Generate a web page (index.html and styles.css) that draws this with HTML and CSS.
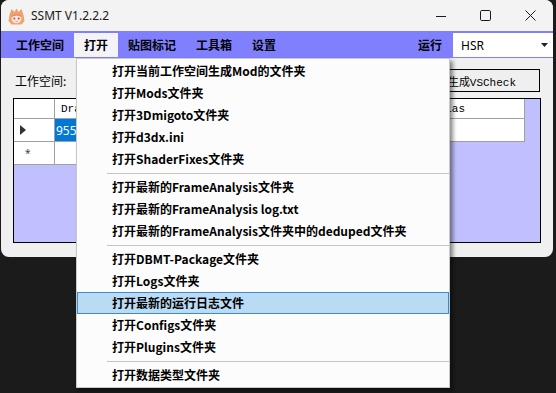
FILE: index.html
```html
<!DOCTYPE html>
<html lang="zh-CN">
  <head>
    <meta charset="UTF-8" />
    <title>SSMT V1.2.2.2</title>
    <link rel="stylesheet" href="styles.css">
  </head>
  <body>
    <div class="window">
      <!-- Title bar -->
      <div class="titlebar">
        <svg class="app-icon" width="17" height="17" viewBox="0 0 17 17">
          <path d="M1.5 7 L3.5 1 L6.5 4 L8.5 0.5 L10.5 4 L13.5 1 L15.5 7 L16.5 13 L13.5 16.5 H3.5 L0.5 13 Z" fill="#eea36c" />
          <ellipse cx="8.5" cy="10.5" rx="5" ry="4.8" fill="#fbe4d8" />
          <path d="M3.5 8 Q8.5 3.5 13.5 8 L13.5 9 Q8.5 6 3.5 9 Z" fill="#e5885a" />
          <circle cx="6.3" cy="10.6" r="1" fill="#b4505a" />
          <circle cx="10.7" cy="10.6" r="1" fill="#b4505a" />
          <path d="M7.6 13.2 Q8.5 13.9 9.4 13.2" stroke="#d06070" stroke-width="0.7" fill="none" />
        </svg>
        <span class="title">SSMT V1.2.2.2</span>
        <div class="caption-buttons">
          <div class="cap">
            <svg width="10" height="10" viewBox="0 0 10 10"><path d="M0 5.5 H10" stroke="#1a1a1a" stroke-width="1" /></svg>
          </div>
          <div class="cap">
            <svg width="11" height="11" viewBox="0 0 11 11"><rect x="0.5" y="0.5" width="10" height="10" rx="1.2" stroke="#1a1a1a" stroke-width="1" fill="none" /></svg>
          </div>
          <div class="cap">
            <svg width="11" height="11" viewBox="0 0 11 11"><path d="M0.5 0.5 L10.5 10.5 M10.5 0.5 L0.5 10.5" stroke="#1a1a1a" stroke-width="1" /></svg>
          </div>
        </div>
      </div>

      <!-- Menu bar -->
      <div class="menubar">
        <div class="menu-item">工作空间</div>
        <div class="menu-item open">打开
          <div class="dropdown">
            <div class="drop-item">打开当前工作空间生成Mod的文件夹</div>
            <div class="drop-item">打开Mods文件夹</div>
            <div class="drop-item">打开3Dmigoto文件夹</div>
            <div class="drop-item">打开d3dx.ini</div>
            <div class="drop-item">打开ShaderFixes文件夹</div>
            <div class="drop-sep"></div>
            <div class="drop-item">打开最新的FrameAnalysis文件夹</div>
            <div class="drop-item">打开最新的FrameAnalysis log.txt</div>
            <div class="drop-item">打开最新的FrameAnalysis文件夹中的deduped文件夹</div>
            <div class="drop-sep"></div>
            <div class="drop-item">打开DBMT-Package文件夹</div>
            <div class="drop-item">打开Logs文件夹</div>
            <div class="drop-item hover">打开最新的运行日志文件</div>
            <div class="drop-item">打开Configs文件夹</div>
            <div class="drop-item">打开Plugins文件夹</div>
            <div class="drop-sep"></div>
            <div class="drop-item">打开数据类型文件夹</div>
          </div>
        </div>
        <div class="menu-item">贴图标记</div>
        <div class="menu-item">工具箱</div>
        <div class="menu-item">设置</div>
        <div class="menu-spacer"></div>
        <div class="run-label">运行</div>
        <div class="combo">
          <span>HSR</span>
          <svg width="7" height="4" viewBox="0 0 7 4"><path d="M0 0 H7 L3.5 4 Z" fill="#222" /></svg>
        </div>
      </div>

      <!-- Client area -->
      <div class="client">
        <div class="top-row">
          <span class="ws-label">工作空间:</span>
          <div class="vscheck">生成VSCheck</div>
        </div>
        <div class="grid-view">
          <div class="gv-table">
            <div class="gv-cell rowhdr"></div>
            <div class="gv-cell colhdr">DrawIB</div>
            <div class="gv-cell colhdr">Alias</div>

            <div class="gv-cell rowhdr">
              <svg width="6" height="10" viewBox="0 0 6 10"><path d="M0 0 L6 5 L0 10 Z" fill="#333" /></svg>
            </div>
            <div class="gv-cell selected">955</div>
            <div class="gv-cell"></div>

            <div class="gv-cell rowhdr"><span class="new-row">*</span></div>
            <div class="gv-cell"></div>
            <div class="gv-cell empty"></div>
          </div>
        </div>
      </div>
    </div>
  </body>
</html>
```

FILE: styles.css
```css
* {
  margin: 0;
  padding: 0;
  box-sizing: border-box;
}

body {
  width: 556px;
  height: 393px;
  overflow: hidden;
  background: #1b1b1b;
  font-family: "Noto Sans CJK SC", "Noto Sans", sans-serif;
  font-size: 12px;
  color: #000;
}

.window {
  width: 552px;
  height: 257px;
  margin-left: 1px;
  background: #f0f0f0;
  border-radius: 8px;
  position: relative;
}

/* Title bar */
.titlebar {
  height: 31px;
  display: flex;
  align-items: center;
  background: #f3f3f3;
  border-radius: 8px 8px 0 0;
}

.app-icon {
  margin-left: 7px;
  margin-top: 1px;
}

.title {
  margin-left: 6px;
  font-family: "Noto Sans", sans-serif;
  font-size: 12px;
  color: #1a1a1a;
}

.caption-buttons {
  margin-left: auto;
  display: flex;
  height: 100%;
}

.cap {
  width: 45px;
  display: flex;
  align-items: center;
  justify-content: center;
}

/* Menu bar */
.menubar {
  height: 27px;
  display: flex;
  align-items: flex-start;
  padding: 2px 0 0 5px;
  background: #8080ff;
}

.menu-item {
  height: 24px;
  line-height: 24px;
  padding: 0 10px;
  font-weight: 700;
  position: relative;
}

.menu-item.open {
  background: #f3f3f8;
}

.menu-spacer {
  flex: 1;
}

.run-label {
  height: 24px;
  line-height: 24px;
  font-weight: 700;
  margin-right: 11px;
}

.combo {
  width: 100px;
  height: 24px;
  background: #fff;
  display: flex;
  align-items: center;
  justify-content: space-between;
  padding: 0 5px 0 8px;
  font-family: "Noto Sans", sans-serif;
  font-size: 12px;
}

/* Dropdown */
.dropdown {
  position: absolute;
  left: 2px;
  top: 25px;
  width: 374px;
  padding: 1px 0;
  background: #fcfcfc;
  border: 1px solid #c8c8c8;
  box-shadow: 3px 3px 4px rgba(0, 0, 0, 0.45);
  z-index: 10;
}

.drop-item {
  height: 22px;
  line-height: 20px;
  padding-left: 34px;
  font-weight: 700;
  white-space: nowrap;
  border: 1px solid transparent;
}

.drop-item.hover {
  background: #b9dbf4;
  border-color: #3b8ad2;
}

.drop-sep {
  height: 6px;
  margin-left: 30px;
  display: flex;
  align-items: center;
}

.drop-sep::after {
  content: "";
  display: block;
  width: 100%;
  height: 1px;
  background: #c4c4c4;
}

/* Client area */
.client {
  padding: 11px 12px 0 12px;
}

.top-row {
  height: 23px;
  display: flex;
  align-items: center;
}

.ws-label {
  margin-left: 2px;
  font-size: 12px;
}

.vscheck {
  margin-left: auto;
  margin-right: 1px;
  width: 180px;
  height: 23px;
  border: 1px solid #000;
  background: #efefef;
  display: flex;
  align-items: center;
  justify-content: flex-end;
  padding-right: 23px;
  font-family: "Liberation Mono", monospace;
  font-size: 11px;
}

.grid-view {
  margin-top: 6px;
  height: 145px;
  border: 1px solid #000;
  background: #c0c0ff;
}

.gv-table {
  display: grid;
  grid-template-columns: 41px 371px 99px;
  grid-template-rows: 20px 23px 23px;
}

.gv-cell {
  background: #fff;
  border-right: 1px solid #a0a0a0;
  border-bottom: 1px solid #a0a0a0;
  display: flex;
  align-items: center;
  font-family: "Noto Sans", sans-serif;
  font-size: 12px;
}

.gv-cell.colhdr {
  padding-left: 6px;
  font-family: "Liberation Mono", monospace;
  font-size: 11px;
}

.gv-cell.rowhdr {
  padding-left: 6px;
}

.gv-cell.selected {
  background: #0078d7;
  color: #fff;
  padding-left: 1px;
}

.gv-cell.empty {
  background: transparent;
  border: none;
}

.new-row {
  font-size: 10px;
  margin-left: 5px;
  color: #444;
  line-height: 1;
}
```
